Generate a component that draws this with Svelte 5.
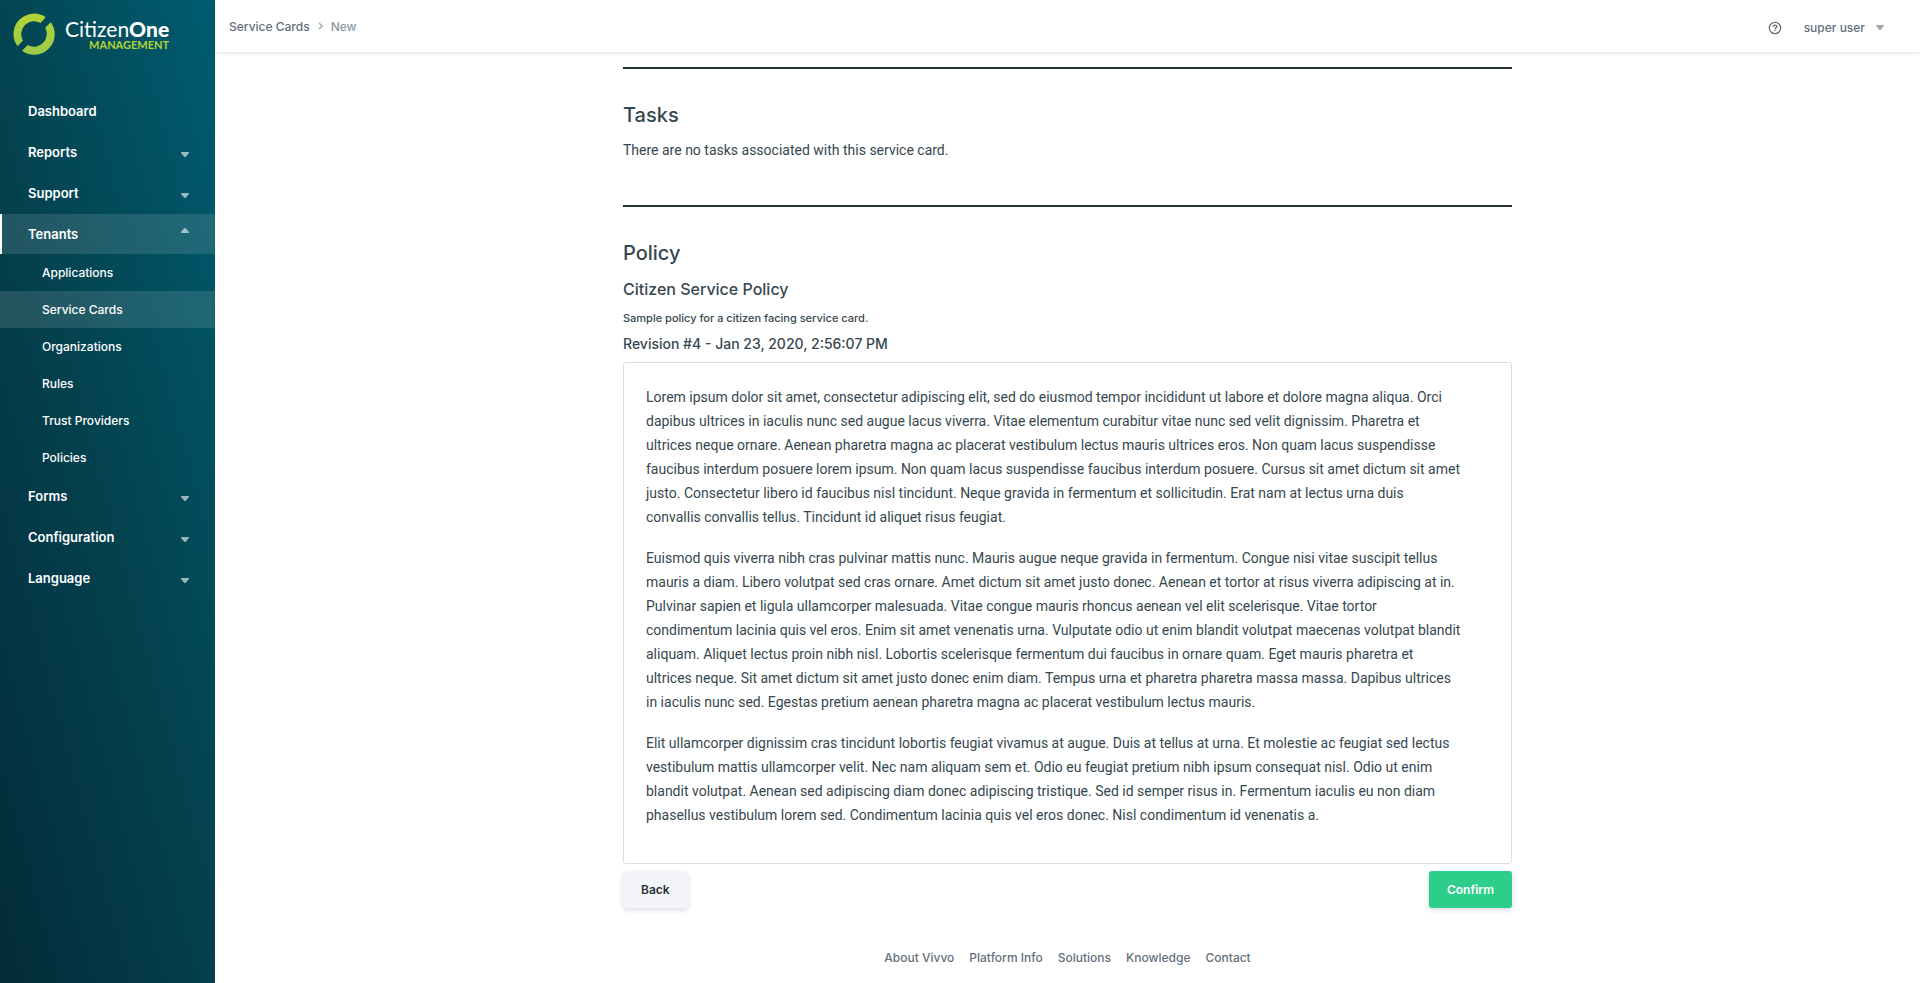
<script lang="ts">
  type Item = { label: string; children?: string[]; expandable?: boolean };

  const nav: Item[] = [
    { label: 'Dashboard' },
    { label: 'Reports', expandable: true },
    { label: 'Support', expandable: true },
    {
      label: 'Tenants',
      expandable: true,
      children: ['Applications', 'Service Cards', 'Organizations', 'Rules', 'Trust Providers', 'Policies']
    },
    { label: 'Forms', expandable: true },
    { label: 'Configuration', expandable: true },
    { label: 'Language', expandable: true }
  ];
  const current = 'Service Cards';

  const policy = [
    `Lorem ipsum dolor sit amet, consectetur adipiscing elit, sed do eiusmod tempor incididunt ut labore et dolore magna aliqua. Orci
dapibus ultrices in iaculis nunc sed augue lacus viverra. Vitae elementum curabitur vitae nunc sed velit dignissim. Pharetra et
ultrices neque ornare. Aenean pharetra magna ac placerat vestibulum lectus mauris ultrices eros. Non quam lacus suspendisse
faucibus interdum posuere lorem ipsum. Non quam lacus suspendisse faucibus interdum posuere. Cursus sit amet dictum sit amet
justo. Consectetur libero id faucibus nisl tincidunt. Neque gravida in fermentum et sollicitudin. Erat nam at lectus urna duis
convallis convallis tellus. Tincidunt id aliquet risus feugiat.`,
    `Euismod quis viverra nibh cras pulvinar mattis nunc. Mauris augue neque gravida in fermentum. Congue nisi vitae suscipit tellus
mauris a diam. Libero volutpat sed cras ornare. Amet dictum sit amet justo donec. Aenean et tortor at risus viverra adipiscing at in.
Pulvinar sapien et ligula ullamcorper malesuada. Vitae congue mauris rhoncus aenean vel elit scelerisque. Vitae tortor
condimentum lacinia quis vel eros. Enim sit amet venenatis urna. Vulputate odio ut enim blandit volutpat maecenas volutpat blandit
aliquam. Aliquet lectus proin nibh nisl. Lobortis scelerisque fermentum dui faucibus in ornare quam. Eget mauris pharetra et
ultrices neque. Sit amet dictum sit amet justo donec enim diam. Tempus urna et pharetra pharetra massa massa. Dapibus ultrices
in iaculis nunc sed. Egestas pretium aenean pharetra magna ac placerat vestibulum lectus mauris.`,
    `Elit ullamcorper dignissim cras tincidunt lobortis feugiat vivamus at augue. Duis at tellus at urna. Et molestie ac feugiat sed lectus
vestibulum mattis ullamcorper velit. Nec nam aliquam sem et. Odio eu feugiat pretium nibh ipsum consequat nisl. Odio ut enim
blandit volutpat. Aenean sed adipiscing diam donec adipiscing tristique. Sed id semper risus in. Fermentum iaculis eu non diam
phasellus vestibulum lorem sed. Condimentum lacinia quis vel eros donec. Nisl condimentum id venenatis a.`
  ];

  const links = ['About Vivvo', 'Platform Info', 'Solutions', 'Knowledge', 'Contact'];
</script>

<div class="app">
  <aside class="sidebar">
    <a class="logo" href="#home">
      <svg width="42" height="42" viewBox="0 0 42 42" aria-hidden="true">
        <defs>
          <linearGradient id="ring" x1="0" y1="0" x2="0" y2="1">
            <stop offset="0" stop-color="#b4d334" />
            <stop offset="1" stop-color="#9bcb49" />
          </linearGradient>
        </defs>
        <path
          fill="url(#ring)"
          d="M4.5 33.2A20.5 20.5 0 0 1 32.7 4.2L27.5 10A12.8 12.8 0 0 0 9.9 27.4Z
             M37.8 9.2A20.5 20.5 0 0 1 9 37.7L14.7 32.1A12.8 12.8 0 0 0 32.2 14.8Z"
        />
      </svg>
      <span class="wordmark">
        <span class="name">Citizen<b>One</b></span>
        <span class="product">MANAGEMENT</span>
      </span>
    </a>
    <nav aria-label="Main">
      {#each nav as item}
        <div class="group">
          <a class="item" class:open={item.children} href="#{item.label}">
            {item.label}
            {#if item.expandable}
              <svg class="caret" width="8" height="5" viewBox="0 0 8 5" aria-hidden="true"><path d="M0 .5Q0 0 .6 0h6.8Q8 0 8 .5 8 1 7.6 1.4L5 4.4Q4 5.4 3 4.4L.4 1.4Q0 1 0 .5Z" /></svg>
            {/if}
          </a>
          {#if item.children}
            {#each item.children as child}
              <a class="sub" class:active={child === current} href="#{child}">{child}</a>
            {/each}
          {/if}
        </div>
      {/each}
    </nav>
  </aside>

  <div class="page">
    <header>
      <nav class="crumbs" aria-label="Breadcrumb">
        <a href="#cards">Service Cards</a>
        <svg width="5" height="8" viewBox="0 0 5 8" aria-hidden="true"><path d="M1 1l3 3-3 3" fill="none" stroke="#a9b1b9" stroke-width="1.6" /></svg>
        <span>New</span>
      </nav>
      <div class="account">
        <button class="help" aria-label="Help">
          <svg width="14" height="14" viewBox="0 0 14 14" fill="none" stroke="#5f6c78" stroke-width="1.2" aria-hidden="true">
            <circle cx="7" cy="7" r="5.7" />
            <path stroke-width="1.4" d="M5.1 5.7C5.2 4.6 6 4.1 7 4.1s1.9.5 1.9 1.4C8.9 6.7 7.1 6.6 7.1 7.9" />
            <path stroke-width="1.4" d="M7.1 8.8v1.3" />
          </svg>
        </button>
        <button class="user">
          super user
          <svg class="caret" width="8" height="5" viewBox="0 0 8 5" aria-hidden="true"><path d="M0 .5Q0 0 .6 0h6.8Q8 0 8 .5 8 1 7.6 1.4L5 4.4Q4 5.4 3 4.4L.4 1.4Q0 1 0 .5Z" /></svg>
        </button>
      </div>
    </header>

    <main>
      <section>
        <h2>Tasks</h2>
        <p class="body">There are no tasks associated with this service card.</p>
      </section>
      <section>
        <h2>Policy</h2>
        <h3>Citizen Service Policy</h3>
        <p class="note">Sample policy for a citizen facing service card.</p>
        <h4>Revision #4 - Jan 23, 2020, 2:56:07 PM</h4>
        <div class="card">
          {#each policy as text}
            <p class="body">{text}</p>
          {/each}
        </div>
        <div class="actions">
          <button class="btn">Back</button>
          <button class="btn primary">Confirm</button>
        </div>
      </section>
    </main>

    <footer>
      {#each links as link}
        <a href="#{link}">{link}</a>
      {/each}
    </footer>
  </div>
</div>

<style>
  :global(body) {
    margin: 0;
    background: #fff;
  }
  .app {
    display: flex;
    min-height: 100vh;
    font-family: Inter, 'Liberation Sans', sans-serif;
    font-size: 14px;
    color: #36474f;
  }
  a {
    color: inherit;
    text-decoration: none;
  }
  button {
    font: inherit;
    color: inherit;
    border: 0;
    background: none;
    padding: 0;
    cursor: pointer;
  }
  .sidebar {
    flex: none;
    width: 215px;
    color: #fff;
    background: linear-gradient(75deg, #042b39, #04424f 50%, #005c70);
  }
  .logo {
    display: flex;
    align-items: center;
    gap: 10px;
    height: 42px;
    padding: 13px 13px 36px;
  }
  .wordmark {
    display: flex;
    flex-direction: column;
    align-items: flex-end;
    padding-top: 2px;
    font-family: Lato, sans-serif;
  }
  .name {
    font-size: 21px;
    line-height: 20px;
    font-weight: 400;
  }
  .name b {
    font-weight: 900;
  }
  .product {
    font-size: 11px;
    line-height: 12px;
    font-weight: 700;
    color: #b4d334;
  }
  .group {
    margin-bottom: 1px;
  }
  .item {
    display: flex;
    align-items: center;
    justify-content: space-between;
    height: 40px;
    padding: 0 26px 0 28px;
    font-size: 13px;
    font-weight: 600;
  }
  .item.open {
    padding-left: 26px;
    border-left: 2px solid #fff;
    background: rgba(255, 255, 255, 0.12);
  }
  .caret {
    fill: currentColor;
    opacity: 0.6;
  }
  .item .caret {
    margin-top: 4px;
  }
  .item.open .caret {
    margin: 0 0 8px;
    transform: rotate(180deg);
  }
  .sub {
    display: flex;
    align-items: center;
    height: 37px;
    padding-left: 42px;
    font-size: 12px;
    font-weight: 500;
  }
  .sub:last-child {
    height: 36px;
  }
  .sub.active {
    background: rgba(255, 255, 255, 0.12);
  }
  .page {
    flex: 1;
    min-width: 0;
    display: flex;
    flex-direction: column;
  }
  header {
    display: flex;
    align-items: center;
    justify-content: space-between;
    height: 52px;
    padding: 0 36px 0 14px;
    font-size: 12px;
    font-weight: 500;
    color: #64707d;
    box-shadow: 0 1px 4px rgba(0, 0, 0, 0.12);
  }
  .crumbs {
    display: flex;
    align-items: center;
    gap: 8px;
  }
  .crumbs span {
    color: #8c98a4;
  }
  .account,
  .user {
    display: flex;
    align-items: center;
  }
  .account {
    gap: 22px;
    padding-top: 3px;
  }
  .user {
    gap: 11px;
  }
  .help {
    display: flex;
  }
  main {
    width: 100%;
    max-width: 889px;
    margin: 15px auto 0;
  }
  section {
    border-top: 2px solid #263238;
    padding-top: 32px;
    margin-bottom: 43px;
  }
  h2,
  h3,
  h4,
  p {
    margin: 0;
  }
  h2 {
    font-size: 20px;
    line-height: 28px;
    font-weight: 500;
    margin-bottom: 9px;
  }
  h3 {
    font-size: 16px;
    line-height: 26px;
    font-weight: 500;
    margin-bottom: 8px;
  }
  h4 {
    font-size: 14px;
    line-height: 20px;
    font-weight: 500;
    margin-bottom: 8px;
  }
  .body {
    font-family: Roboto, 'Liberation Sans', sans-serif;
    line-height: 24px;
    white-space: pre-line;
  }
  .note {
    font-size: 11px;
    line-height: 16px;
    font-weight: 500;
    margin-bottom: 8px;
  }
  .card {
    border: 1px solid #dcdfe2;
    border-radius: 3px;
    padding: 22px 22px 36px;
  }
  .card p + p {
    margin-top: 17px;
  }
  .actions {
    display: flex;
    justify-content: space-between;
    margin-top: 7px;
  }
  .btn {
    height: 37px;
    padding: 0 18px;
    border-radius: 3px;
    background: #f4f5f8;
    color: #263238;
    font-size: 12px;
    font-weight: 600;
    box-shadow: 0 2px 5px rgba(50, 60, 90, 0.18);
  }
  .btn.primary {
    background: #2dce89;
    color: #fff;
  }
  footer {
    display: flex;
    justify-content: center;
    gap: 15px;
    font-size: 12px;
    line-height: 14px;
    font-weight: 500;
    color: #64707d;
  }
</style>
